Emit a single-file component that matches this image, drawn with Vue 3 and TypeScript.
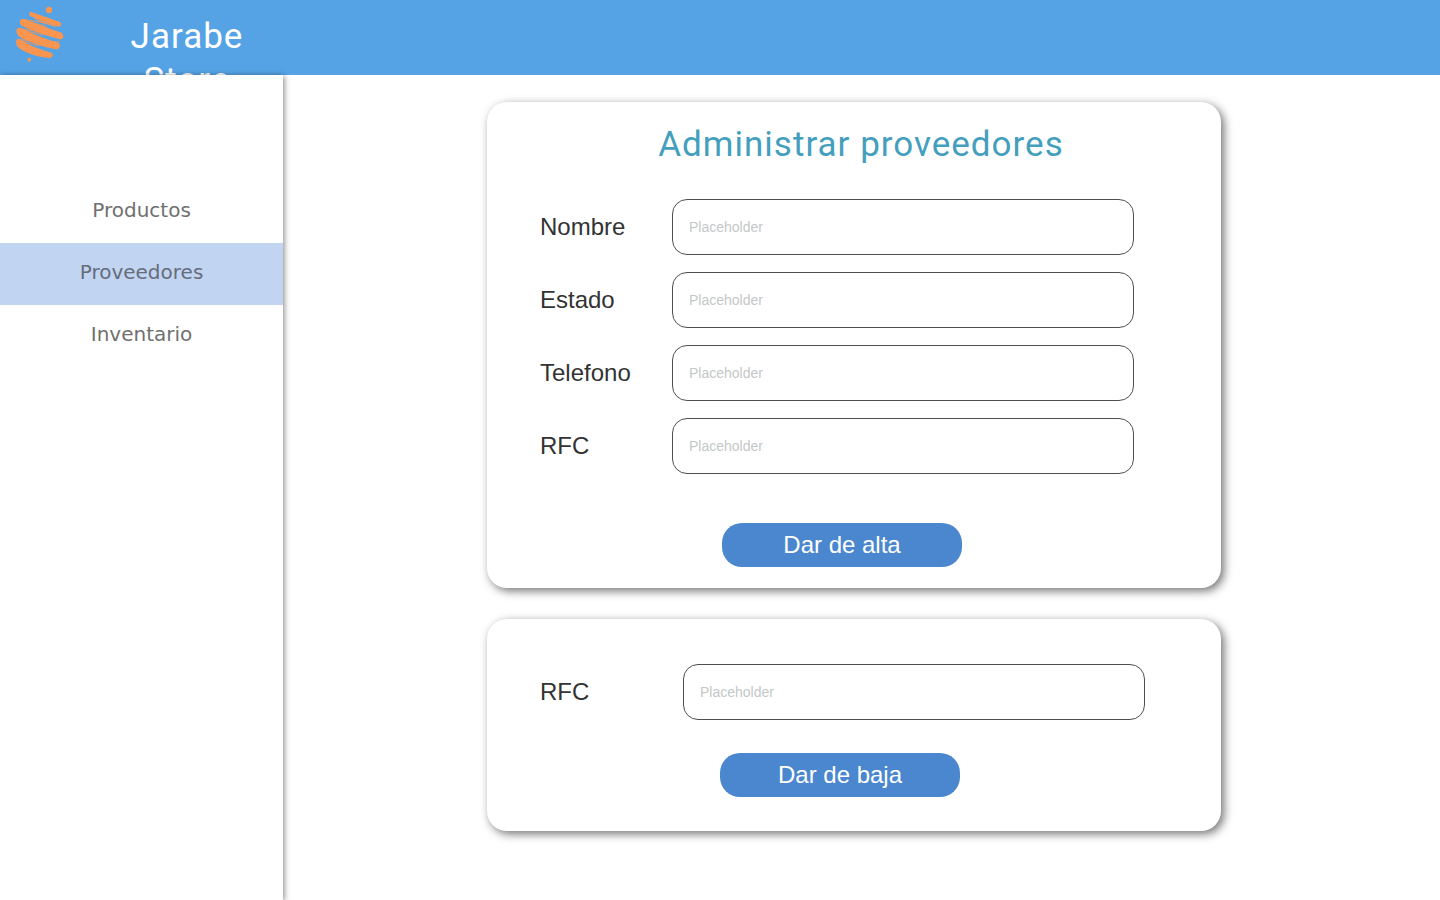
<script setup lang="ts">
import { ref } from 'vue'

interface Field {
  id: string
  label: string
}

const sections: string[] = ['Productos', 'Proveedores', 'Inventario']
const active = ref<string>('Proveedores')

const fields: Field[] = [
  { id: 'nombre', label: 'Nombre' },
  { id: 'estado', label: 'Estado' },
  { id: 'telefono', label: 'Telefono' },
  { id: 'rfc', label: 'RFC' },
]

const values = ref<Record<string, string>>({ nombre: '', estado: '', telefono: '', rfc: '' })
const rfcBaja = ref<string>('')
</script>

<template>
  <div class="page">
    <header class="topbar">
      <svg class="logo" viewBox="0 0 240 225" aria-hidden="true">
        <g fill="#fa9550">
          <circle cx="147" cy="30" r="9.500" />
          <circle cx="88" cy="179" r="5.500" />
          <path d="M94 36L180 66Q184 69 183 75Q181 81 174 80L91 49Q86 46 88 40Q90 35 94 36Z" />
          <path d="M68 57Q78 58 100 68L184 98Q191 103 190 110Q188 119 180 118Q120 103 66 78Q59 74 59 66Q61 57 68 57Z" />
          <path d="M55 84Q66 85 82 93Q120 112 176 129Q182 134 179 142Q176 149 167 148Q105 136 64 114Q48 104 49 92Q50 84 55 84Z" />
          <path d="M52 118Q60 118 70 124Q100 144 154 158Q161 163 158 168Q155 174 146 174Q95 169 61 147Q48 138 48 126Q49 118 52 118Z" />
        </g>
        <g fill="none" stroke="#fa9550" stroke-width="2.500" stroke-linecap="round">
          <path d="M104 56L136 70M118 59L164 79" />
          <path d="M72 59L120 66L164 78M84 64L138 79" />
          <path d="M56 85L110 93L164 106M72 90L130 105" />
          <path d="M54 118L92 122L134 136M66 122L116 138" />
          <path d="M140 123L178 126M148 98L182 99" />
        </g>
      </svg>
      <div class="brand">Jarabe Store</div>
    </header>

    <div class="body">
      <nav class="sidebar">
        <a
          v-for="s in sections"
          :key="s"
          href="#"
          class="item"
          :class="{ active: s === active }"
          @click.prevent="active = s"
        >{{ s }}</a>
      </nav>

      <main class="content">
        <h1 class="title">Administrar proveedores</h1>
        <form class="card card-alta" @submit.prevent>
          <div v-for="f in fields" :key="f.id" class="row">
            <label :for="f.id">{{ f.label }}</label>
            <input :id="f.id" v-model="values[f.id]" type="text" placeholder="Placeholder" />
          </div>
          <button type="submit">Dar de alta</button>
        </form>

        <form class="card card-baja" @submit.prevent>
          <div class="row">
            <label for="rfc-baja">RFC</label>
            <input id="rfc-baja" v-model="rfcBaja" type="text" placeholder="Placeholder" />
          </div>
          <button type="submit">Dar de baja</button>
        </form>
      </main>
    </div>
  </div>
</template>

<style>
body {
  background: #fff;
}
</style>

<style scoped>
.page {
  display: flex;
  flex-direction: column;
  min-height: 100vh;
  font-family: "Liberation Sans", Arial, sans-serif;
}

.topbar {
  display: flex;
  height: 75px;
  background: #55a3e5;
}

.logo {
  flex: none;
  width: 80px;
  height: 75px;
}

.brand {
  width: 146px;
  margin-left: 34px;
  padding-top: 15px;
  color: #fff;
  font-family: Roboto, sans-serif;
  font-size: 35px;
  line-height: 44px;
  letter-spacing: 1px;
  text-align: center;
}

.body {
  display: flex;
  flex: 1;
}

.sidebar {
  position: relative;
  flex: none;
  box-sizing: border-box;
  width: 283px;
  padding-top: 106px;
  background: #fff;
  box-shadow: 1px 1px 6px rgba(0, 0, 0, 0.5);
}

.item {
  display: block;
  height: 62px;
  color: #707070;
  font-family: Verdana, "DejaVu Sans", sans-serif;
  font-size: 20px;
  line-height: 58px;
  text-align: center;
  text-decoration: none;
}

.item.active {
  background: #c1d4f2;
  color: #666d7a;
}

.content {
  display: grid;
  flex: 1;
  grid-template-columns: minmax(0, 734px);
  grid-template-rows: 97px auto auto;
  align-content: start;
  justify-content: center;
  padding: 27px 15px 27px 0;
}

.title {
  z-index: 1;
  grid-row: 1;
  grid-column: 1;
  margin: 0;
  padding: 21px 0 0 14px;
  color: #449fbe;
  font-family: Roboto, sans-serif;
  font-size: 35px;
  font-weight: 400;
  line-height: 44px;
  letter-spacing: 1px;
  text-align: center;
}

.card {
  display: flex;
  flex-direction: column;
  gap: 17px;
  box-sizing: border-box;
  padding: 45px 76px 34px 53px;
  border-radius: 20px;
  background: #fff;
  box-shadow: 3px 3px 10px rgba(0, 0, 0, 0.55);
}

.card-alta {
  grid-row: 1 / 3;
  grid-column: 1;
  padding: 97px 87px 21px 53px;
}

.card-baja {
  margin-top: 31px;
}

.row {
  display: grid;
  grid-template-columns: 132px minmax(0, 1fr);
  align-items: center;
}

.card-baja .row {
  grid-template-columns: 143px minmax(0, 1fr);
}

label {
  color: #333;
  font-size: 24px;
  line-height: 28px;
}

input {
  box-sizing: border-box;
  width: 100%;
  height: 56px;
  padding: 0 16px;
  border: 1px solid #4f4f4f;
  border-radius: 15px;
  background: #fff;
  color: #333;
  font-family: inherit;
  font-size: 14px;
}

input::placeholder {
  color: #c3c8c8;
  opacity: 1;
}

button {
  width: 240px;
  height: 44px;
  margin: 32px 0 0 182px;
  padding: 0;
  border: 0;
  border-radius: 20px;
  background: #4a87ce;
  color: #fff;
  font-family: inherit;
  font-size: 24px;
  line-height: 44px;
  cursor: pointer;
}

.card-baja button {
  margin: 16px 0 0 180px;
}
</style>
